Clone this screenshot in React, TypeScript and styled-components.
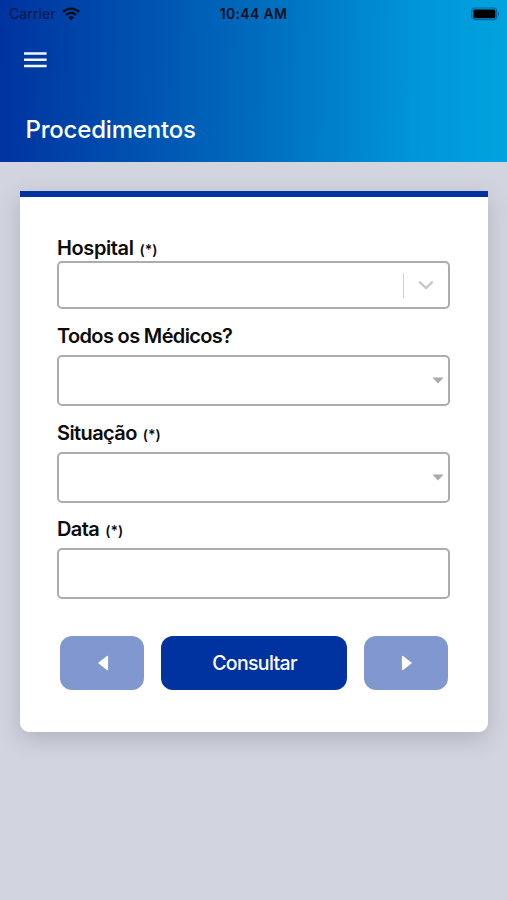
import React from "react";
import styled, { createGlobalStyle } from "styled-components";

const GlobalStyle = createGlobalStyle`
  *, *::before, *::after { box-sizing: border-box; }
  body {
    margin: 0;
    background: #d2d5df;
    font-family: Inter, "Liberation Sans", sans-serif;
  }
`;

const Screen = styled.div`
  width: 507px;
  height: 900px;
  overflow: hidden;
  background: #d2d5df;
`;

const Header = styled.header`
  height: 162px;
  background: linear-gradient(91deg, #0033a0 0%, #006bbd 50%, #0095d9 82%, #00a3de 100%);
`;

const StatusBar = styled.div`
  display: grid;
  grid-template-columns: 1fr auto 1fr;
  align-items: center;
  height: 28px;
  padding: 0 7px 0 9px;
  color: #06101f;
`;

const Carrier = styled.div`
  display: flex;
  align-items: center;
  gap: 6px;
  font-size: 14px;
  line-height: 28px;
  letter-spacing: 0.1px;
  color: #031645;
`;

const Clock = styled.div`
  position: relative;
  left: -1px;
  font-size: 14px;
  font-weight: 600;
  line-height: 28px;
  letter-spacing: 0.3px;
`;

const BatteryIcon = styled.svg`
  display: block;
  justify-self: end;
`;

const MenuButton = styled.button`
  display: flex;
  margin: 24px 0 0 24px;
  padding: 0;
  border: 0;
  background: none;
`;

const Title = styled.h1`
  margin: 45px 0 0 25.5px;
  color: #fff;
  font-size: 24px;
  font-weight: 450;
  line-height: 33px;
  letter-spacing: -0.2px;
`;

const Card = styled.main`
  width: 468px;
  height: 541px;
  margin: 29px 0 0 20px;
  padding: 39px 38px 0 37px;
  border-top: 6px solid #0033a0;
  border-radius: 0 0 9px 9px;
  background: #fff;
  box-shadow: 0 7px 22px rgba(70, 72, 80, 0.24);
`;

const Field = styled.div<{ $gap: number }>`
  margin-bottom: ${(p) => p.$gap}px;
`;

const Label = styled.div<{ $height: number }>`
  height: ${(p) => p.$height}px;
  color: #0c0c0c;
  font-size: 20px;
  font-weight: 600;
  line-height: 25px;
  white-space: nowrap;
`;

const LabelText = styled.span<{ $spacing: number }>`
  letter-spacing: ${(p) => p.$spacing}px;
`;

const Required = styled.small`
  margin-left: 6px;
  font-size: 14px;
  letter-spacing: 0;
`;

const Control = styled.div<{ $height: number; $right: number }>`
  display: flex;
  align-items: center;
  justify-content: flex-end;
  height: ${(p) => p.$height}px;
  padding-right: ${(p) => p.$right}px;
  border: 2px solid #acacac;
  border-radius: 5px;
  background: #fff;
`;

const Divider = styled.span`
  width: 1.5px;
  height: 25px;
  margin-right: 14px;
  background: #d0d0d0;
`;

const Actions = styled.div`
  display: grid;
  grid-template-columns: 84px 186px 84px;
  gap: 17px;
  margin: 37px 0 0 3px;
`;

const Button = styled.button<{ $muted?: boolean }>`
  display: flex;
  align-items: center;
  justify-content: center;
  height: 54px;
  padding: 0 0 0 1px;
  border: 0;
  border-radius: 12px;
  background: ${(p) => (p.$muted ? "#8098cf" : "#0033a0")};
  color: #fff;
  font-family: inherit;
  font-size: 19.5px;
  font-weight: 450;
  letter-spacing: -0.65px;
`;

const WifiIcon = () => (
  <svg width="18" height="14" viewBox="0 0 18 14" fill="none" stroke="#031020" strokeWidth="2.4">
    <path d="M1 4.8C5.5.5 12.5.5 17 4.8" />
    <path d="M4 8C6.9 5.3 11.1 5.3 14 8" />
    <path d="M6 10.4C7.6 8.9 10.4 8.9 12 10.4L9 13.3Z" fill="#031020" stroke="none" />
  </svg>
);

const Caret = () => (
  <svg width="12" height="7" viewBox="0 0 12 7">
    <path d="M.4.5H11.6L6 6.6Z" fill="#a9a9a9" />
  </svg>
);

const Triangle = ({ left = false }: { left?: boolean }) => (
  <svg width="12" height="16" viewBox="0 0 12 16">
    <path
      d={left ? "M10.4 1.5V14.5L2 8Z" : "M1.6 1.5V14.5L10 8Z"}
      fill="#fff"
      stroke="#fff"
      strokeWidth="1.4"
      strokeLinejoin="round"
    />
  </svg>
);

export default function App() {
  return (
    <Screen>
      <GlobalStyle />
      <Header>
        <StatusBar>
          <Carrier>
            Carrier <WifiIcon />
          </Carrier>
          <Clock>10:44 AM</Clock>
          <BatteryIcon width="30" height="14" viewBox="0 0 30 14">
            <rect x="1.7" y="1" width="25" height="11.6" rx="3.3" fill="none" stroke="#00649f" strokeWidth="1.2" />
            <rect x="3.4" y="2.5" width="22" height="8.8" rx="1.6" fill="#000" />
            <path d="M28 4.8Q30.3 7 28 9.2Z" fill="#00639a" />
          </BatteryIcon>
        </StatusBar>
        <MenuButton aria-label="Menu">
          <svg width="23" height="16" viewBox="0 0 23 16">
            <path d="M0 1.5H22.6M0 7.8H22.6M0 14H22.6" stroke="#f4f7ff" strokeWidth="2.6" />
          </svg>
        </MenuButton>
        <Title>Procedimentos</Title>
      </Header>
      <Card>
        <Field $gap={15}>
          <Label $height={25}>
            <LabelText $spacing={-0.4}>Hospital</LabelText>
            <Required>(*)</Required>
          </Label>
          <Control $height={48} $right={14}>
            <Divider />
            <svg width="16" height="10" viewBox="0 0 16 10">
              <path d="M2 2.3L8 8L14 2.3" fill="none" stroke="#c8c8c8" strokeWidth="2.4" strokeLinecap="round" />
            </svg>
          </Control>
        </Field>
        <Field $gap={15}>
          <Label $height={31}>
            <LabelText $spacing={-0.65}>Todos os Médicos?</LabelText>
          </Label>
          <Control $height={51} $right={4}>
            <Caret />
          </Control>
        </Field>
        <Field $gap={14}>
          <Label $height={31}>
            <LabelText $spacing={-0.6}>Situação</LabelText>
            <Required>(*)</Required>
          </Label>
          <Control $height={51} $right={4}>
            <Caret />
          </Control>
        </Field>
        <Field $gap={0}>
          <Label $height={31}>
            <LabelText $spacing={-0.6}>Data</LabelText>
            <Required>(*)</Required>
          </Label>
          <Control $height={51} $right={4} />
        </Field>
        <Actions>
          <Button $muted aria-label="Anterior">
            <Triangle left />
          </Button>
          <Button>Consultar</Button>
          <Button $muted aria-label="Próximo">
            <Triangle />
          </Button>
        </Actions>
      </Card>
    </Screen>
  );
}
